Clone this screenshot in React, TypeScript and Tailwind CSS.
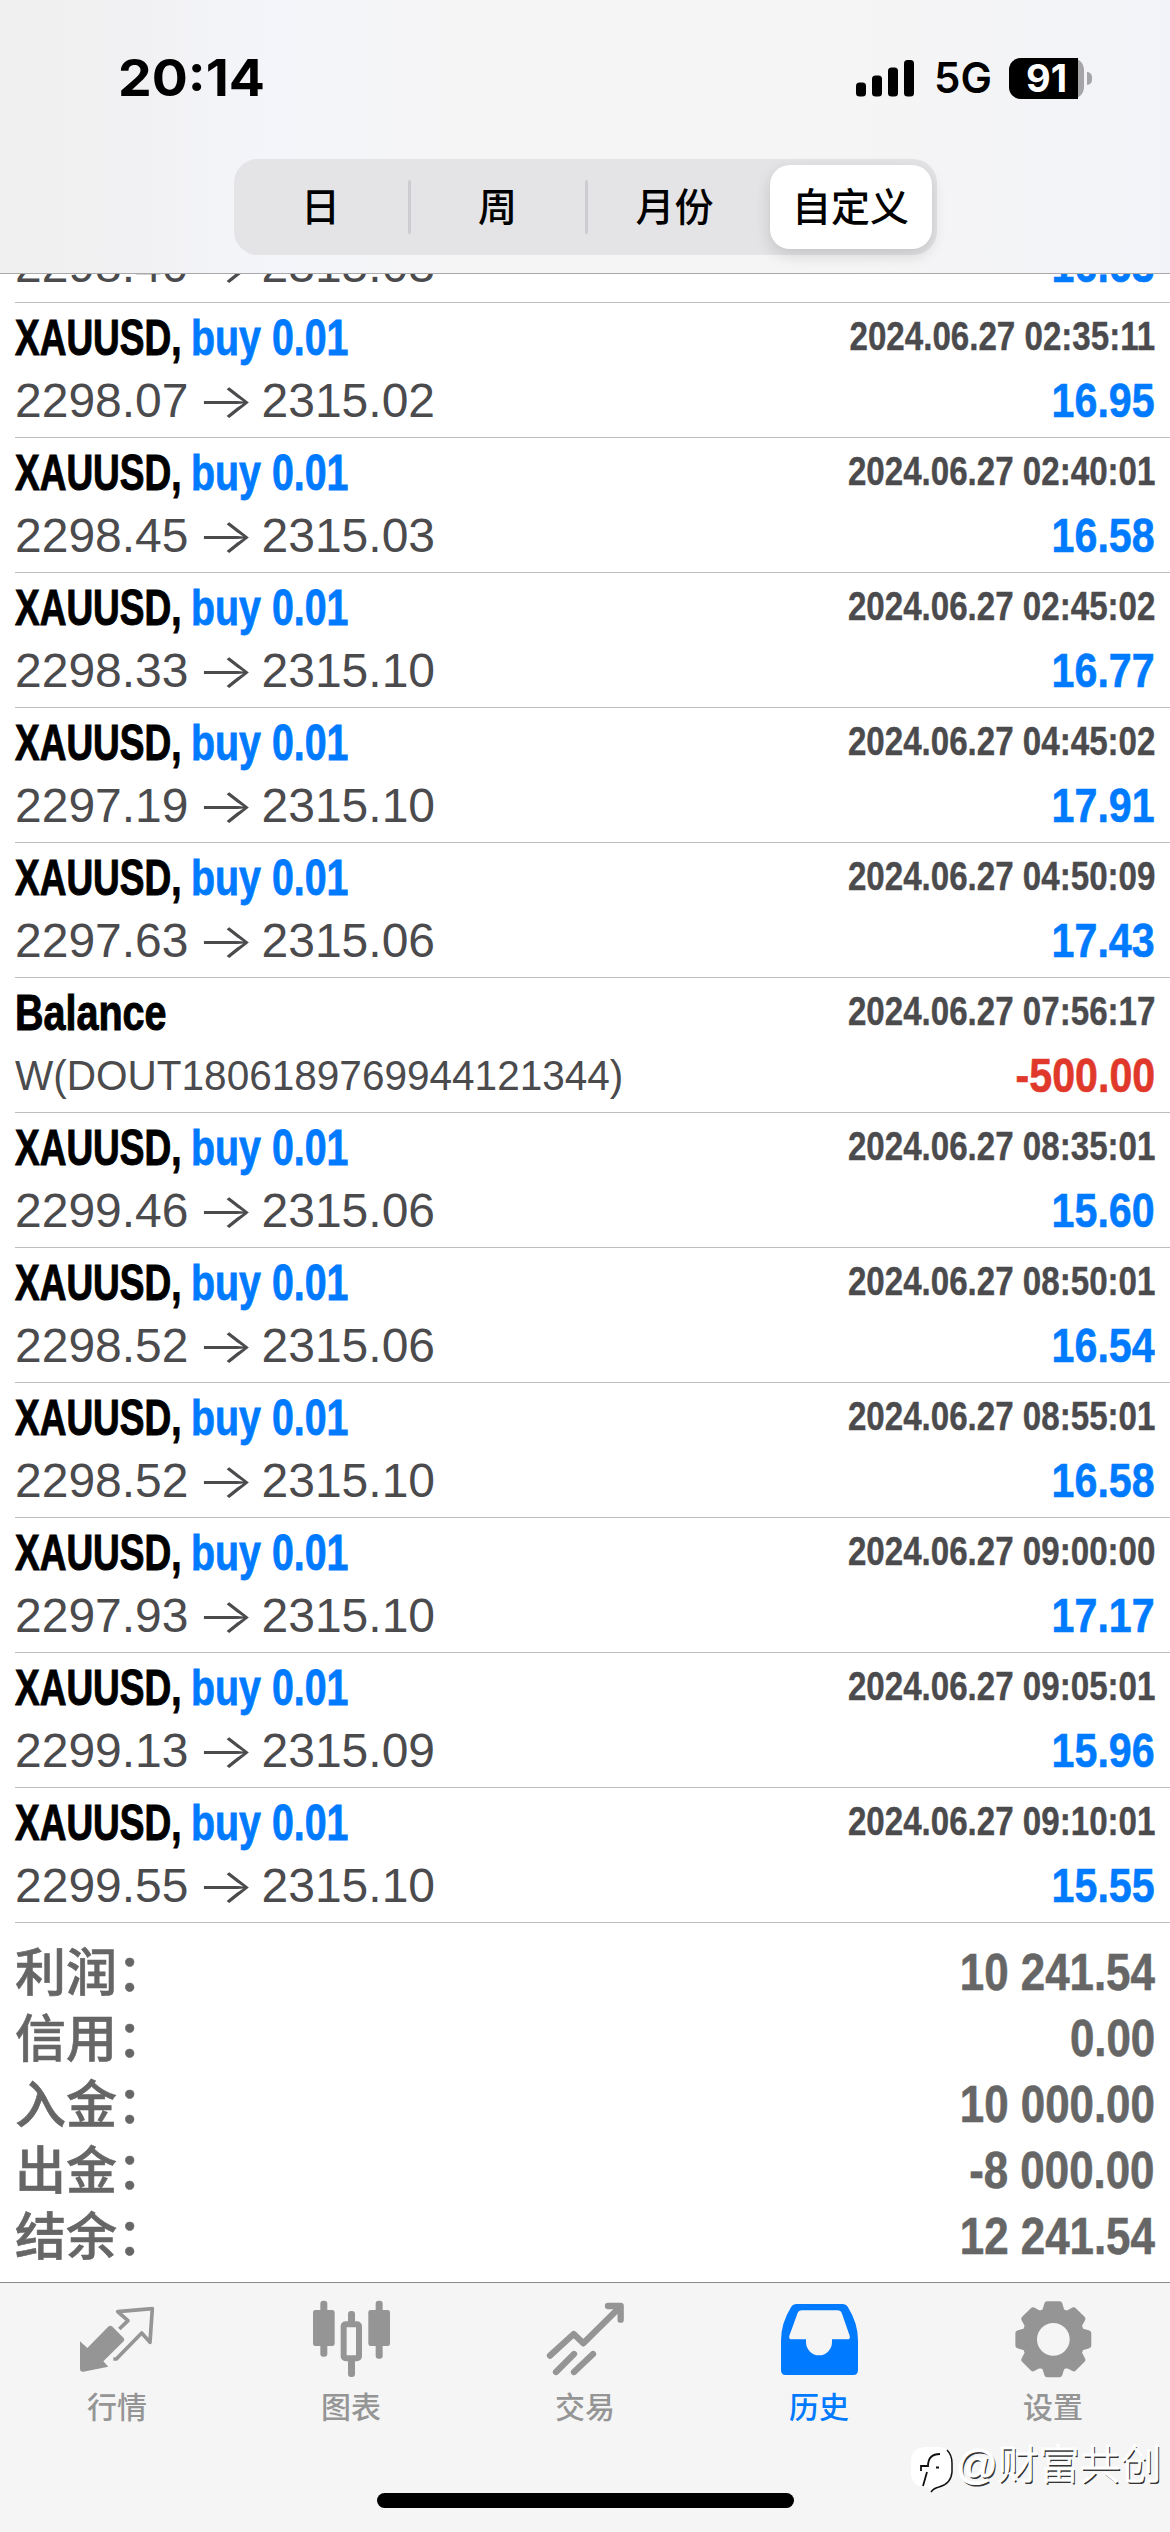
import React from 'react';

interface HistoryRow {
  title: string;
  action?: string;
  time?: string;
  open?: string;
  close?: string;
  comment?: string;
  profit: string;
}

const deal = (open: string, close: string, time: string, profit: string): HistoryRow => ({
  title: 'XAUUSD,',
  action: 'buy 0.01',
  time: `2024.06.27 ${time}`,
  open,
  close,
  profit,
});

const rows: HistoryRow[] = [
  deal('2298.07', '2315.02', '02:35:11', '16.95'),
  deal('2298.45', '2315.03', '02:40:01', '16.58'),
  deal('2298.33', '2315.10', '02:45:02', '16.77'),
  deal('2297.19', '2315.10', '04:45:02', '17.91'),
  deal('2297.63', '2315.06', '04:50:09', '17.43'),
  {
    title: 'Balance',
    time: '2024.06.27 07:56:17',
    comment: 'W(DOUT1806189769944121344)',
    profit: '-500.00',
  },
  deal('2299.46', '2315.06', '08:35:01', '15.60'),
  deal('2298.52', '2315.06', '08:50:01', '16.54'),
  deal('2298.52', '2315.10', '08:55:01', '16.58'),
  deal('2297.93', '2315.10', '09:00:00', '17.17'),
  deal('2299.13', '2315.09', '09:05:01', '15.96'),
  deal('2299.55', '2315.10', '09:10:01', '15.55'),
];

const summary = [
  { label: '利润：', value: '10 241.54' },
  { label: '信用：', value: '0.00' },
  { label: '入金：', value: '10 000.00' },
  { label: '出金：', value: '-8 000.00' },
  { label: '结余：', value: '12 241.54' },
];

const periods = ['日', '周', '月份'];

// Outline of the settings gear, eight teeth round the centre
const gearPoints = Array.from({ length: 8 })
  .flatMap((_, i) =>
    [
      [-17, 87],
      [-10, 107],
      [10, 107],
      [17, 87],
    ].map(([offset, r]) => {
      const a = ((i * 45 + offset) * Math.PI) / 180;
      return `${(760 + r * Math.sin(a)).toFixed(1)},${(208 - r * Math.cos(a)).toFixed(1)}`;
    })
  )
  .join(' ');

const QuotesIcon = () => (
  <svg viewBox="225 84 252 252" className="w-[84px] h-[84px]">
    <path d="M240 214L262 234L326 169Q331 165 336 169L371 204Q375 209 371 214L310 274L325 290L250 305Q240 306 240 296Z" fill="currentColor" />
    <path d="M358 177L384 152L353 125L457 116L450 217L425 189L349 267H340" fill="none" stroke="currentColor" strokeWidth="11" strokeLinejoin="round" />
  </svg>
);

const ChartIcon = () => (
  <svg viewBox="927 84 252 252" className="w-[84px] h-[84px]" fill="currentColor">
    <rect x="961" y="92" width="21" height="168" rx="9" />
    <rect x="939" y="120" width="65" height="108" rx="7" />
    <rect x="1127" y="92" width="21" height="174" rx="9" />
    <rect x="1105" y="120" width="65" height="108" rx="7" />
    <rect x="1044" y="123" width="21" height="45" rx="9" />
    <rect x="1044" y="262" width="21" height="59" rx="9" />
    <rect x="1031" y="163" width="46" height="102" rx="6" fill="none" stroke="currentColor" strokeWidth="18" />
  </svg>
);

const TradeIcon = () => (
  <svg viewBox="309 84 252 252" className="w-[84px] h-[84px]" fill="none" stroke="currentColor" strokeWidth="19" strokeLinecap="round" strokeLinejoin="round">
    <path d="M330 257L401 192L430 220L537 114" />
    <path d="M504 108L542 108L542 149" />
    <path d="M348 306L402 252M402 306L459 252" />
  </svg>
);

const HistoryIcon = () => (
  <svg viewBox="1011 84 252 252" className="w-[84px] h-[84px]" fill="currentColor" fillRule="evenodd">
    <path d="M1070 102H1207Q1218 102 1224 112Q1254 160 1254 212V300Q1254 315 1240 315H1037Q1023 315 1023 300V212Q1023 160 1053 112Q1059 102 1070 102ZM1086 121Q1076 121 1072 131L1048 197Q1045 208 1056 208H1098V216A39 40 0 0 0 1176 216V208H1222Q1232 208 1229 197L1206 131Q1202 121 1192 121Z" />
  </svg>
);

const SettingsIcon = () => (
  <svg viewBox="633 84 252 252" className="w-[84px] h-[84px]">
    <polygon points={gearPoints} fill="currentColor" stroke="currentColor" strokeWidth="17" strokeLinejoin="round" />
    <circle cx="760" cy="208" r="49" fill="#f5f5f5" />
  </svg>
);

const tabs = [
  { label: '行情', icon: QuotesIcon },
  { label: '图表', icon: ChartIcon },
  { label: '交易', icon: TradeIcon },
  { label: '历史', icon: HistoryIcon, active: true },
  { label: '设置', icon: SettingsIcon },
];

const StatusBar = () => (
  <div className="h-[159px] pt-[50px] pl-[118px] pr-[78px] flex items-start justify-between font-['Inter',sans-serif] text-black">
    <span className="text-[51px] leading-[56px] font-bold origin-left scale-x-[1.05]">20:14</span>
    <div className="h-14 flex items-center">
      <svg viewBox="0 0 58 37" className="w-[58px] h-[37px]">
        <rect x="0" y="22.5" width="10" height="14" rx="3.5" />
        <rect x="16" y="15.5" width="10" height="21" rx="3.5" />
        <rect x="32" y="7.5" width="10" height="29" rx="3.5" />
        <rect x="48" y="0" width="10" height="36.5" rx="3.5" />
      </svg>
      <span className="ml-[20px] w-[55px] text-[42px] leading-[50px] font-semibold origin-left">5G</span>
      <div className="ml-[20px] w-[75px] h-[41px] rounded-[12px] bg-[#a5a5a8] flex items-center">
        <div className="w-[69px] h-[41px] rounded-l-[12px] bg-black text-white flex items-center justify-center">
          <span className="pl-[6px] text-[38px] leading-[48px] font-bold">91</span>
        </div>
      </div>
      <div className="ml-[3px] w-[5px] h-[13px] rounded-r-full bg-[#a5a5a8]" />
    </div>
  </div>
);

const PeriodSwitch = () => (
  <div className="mx-auto w-[703px] h-24 rounded-[24px] bg-[#e4e4e7] pr-[5px] flex items-center text-[39px] leading-[60px] font-medium text-black">
    {periods.map((period, i) => (
      <React.Fragment key={period}>
        {i > 0 && <div className="w-[3px] h-[54px] rounded-full bg-[#cdcdd1]" />}
        <div className="w-[174px] pt-[2px] flex items-center justify-center">{period}</div>
      </React.Fragment>
    ))}
    <div className="ml-auto w-[162px] h-[84px] pt-[2px] rounded-[20px] bg-white shadow-[0_6px_16px_rgba(0,0,0,0.14)] flex items-center justify-center">
      自定义
    </div>
  </div>
);

const PriceLine: React.FC<{ row: HistoryRow }> = ({ row }) => (
  <div className="h-[64px] flex items-center justify-between whitespace-nowrap">
    {row.comment ? (
      <div className="text-[42px] leading-[64px] text-[#4b4b4e] origin-left scale-x-[0.965]">{row.comment}</div>
    ) : (
      <div className="text-[48px] leading-[64px] text-[#4b4b4e] flex">
        <span>{row.open}</span>
        <span className="w-[73px] text-center font-['Inter'] font-light origin-center scale-x-[1.28]">→</span>
        <span>{row.close}</span>
      </div>
    )}
    <div
      className={`text-[49px] leading-[62px] pb-[2px] font-bold origin-right scale-x-[0.84] [-webkit-text-stroke:0.6px_currentColor] ${
        row.profit.startsWith('-') ? 'text-[#e0392b]' : 'text-[#007aff]'
      }`}
    >
      {row.profit}
    </div>
  </div>
);

const HistoryItem: React.FC<{ row: HistoryRow }> = ({ row }) => (
  <div className="h-[135px] shrink-0 border-b border-[#bdbdc0] pr-[15px] pt-[6px]">
    <div className="h-[60px] flex items-start justify-between font-bold whitespace-nowrap">
      {row.action ? (
        <div className="flex text-[50px] leading-[58px]">
          <span className="w-[176px] text-black origin-left scale-x-[0.74] [-webkit-text-stroke:1px_currentColor]">{row.title}</span>
          <span className="text-[#007aff] origin-left scale-x-[0.787] [-webkit-text-stroke:0.8px_currentColor]">{row.action}</span>
        </div>
      ) : (
        <div className="text-[50px] leading-[58px] text-black origin-left scale-x-[0.79] [-webkit-text-stroke:1px_currentColor]">{row.title}</div>
      )}
      <div className="text-[40px] leading-[55px] text-[#4b4b4e] origin-right scale-x-[0.828] [-webkit-text-stroke:0.4px_currentColor]">{row.time}</div>
    </div>
    <PriceLine row={row} />
  </div>
);

const Watermark = () => (
  <div className="absolute left-[911px] top-[2440px] flex items-start">
    <svg viewBox="0 0 44 54" className="w-[44px] h-[54px]">
      <path d="M14 7H28Q41 8 41 22V32Q41 44 29 47Q24 48 20 52L17 47H13Q0 46 0 33V20Q1 8 14 7Z" fill="#fff" />
      <path d="M36 10Q41 15 41 23V32Q40 44 28 47Q23 48 20 52" fill="none" stroke="#111" strokeWidth="1.5" />
      <path d="M29 14Q17 14 17 26H10V31M16 32L12 46M25 27.5H28" fill="none" stroke="#111" strokeWidth="1.8" />
    </svg>
    <span className="ml-px text-[41px] leading-[50px] font-light text-white whitespace-nowrap [-webkit-text-stroke:1px_white] [text-shadow:1.5px_1.5px_0.5px_rgba(0,0,0,0.8)]">
      @财富共创
    </span>
  </div>
);

const App: React.FC = () => {
  return (
    <div className="relative w-[1170px] h-[2532px] overflow-hidden bg-white flex flex-col font-['Liberation_Sans','Noto_Sans_CJK_SC',sans-serif]">
      <header className="h-[274px] shrink-0 border-b border-[#a9a9ab] bg-[linear-gradient(90deg,#f0f0f0_0%,#f1f1f3_12%,#f4f5fa_23%,#f5f5f5_42%,#f5f5f5_72%,#f2f3f8_100%)]">
        <StatusBar />
        <PeriodSwitch />
      </header>

      <main className="flex-1 flex flex-col pl-[15px]">
        {/* This deal is scrolled under the header, only its foot shows */}
        <div className="h-[29px] shrink-0 overflow-hidden flex flex-col justify-end border-b border-[#bdbdc0] pr-[15px] pb-[4px]">
          <div className="shrink-0">
            <PriceLine row={{ title: '', open: '2298.40', close: '2315.03', profit: '16.63' }} />
          </div>
        </div>
        {rows.map((row) => (
          <HistoryItem key={row.time} row={row} />
        ))}

        <div className="pt-[17px] pr-[15px] text-[#666]">
          {summary.map((item) => (
            <div key={item.label} className="h-[66px] flex items-center justify-between whitespace-nowrap">
              <span className="pt-px text-[51px] leading-[66px] font-medium [-webkit-text-stroke:0.6px_currentColor]">{item.label}</span>
              <span className="text-[51px] leading-[66px] font-bold origin-right scale-x-[0.86] [-webkit-text-stroke:0.6px_currentColor]">{item.value}</span>
            </div>
          ))}
        </div>
      </main>

      <nav className="h-[250px] shrink-0 border-t border-[#8a8a8c] bg-[#f5f5f5] flex flex-col items-center">
        <div className="w-full h-[210px] pt-[15px] flex">
          {tabs.map(({ label, icon: Icon, active }) => (
            <div key={label} className={`flex-1 flex flex-col items-center ${active ? 'text-[#007aff]' : 'text-[#959595]'}`}>
              <Icon />
              <span className="mt-[4px] text-[30px] leading-[44px] font-medium">{label}</span>
            </div>
          ))}
        </div>
        <div className="w-[417px] h-[15px] rounded-full bg-black" />
      </nav>

      <Watermark />
    </div>
  );
};

export default App;
